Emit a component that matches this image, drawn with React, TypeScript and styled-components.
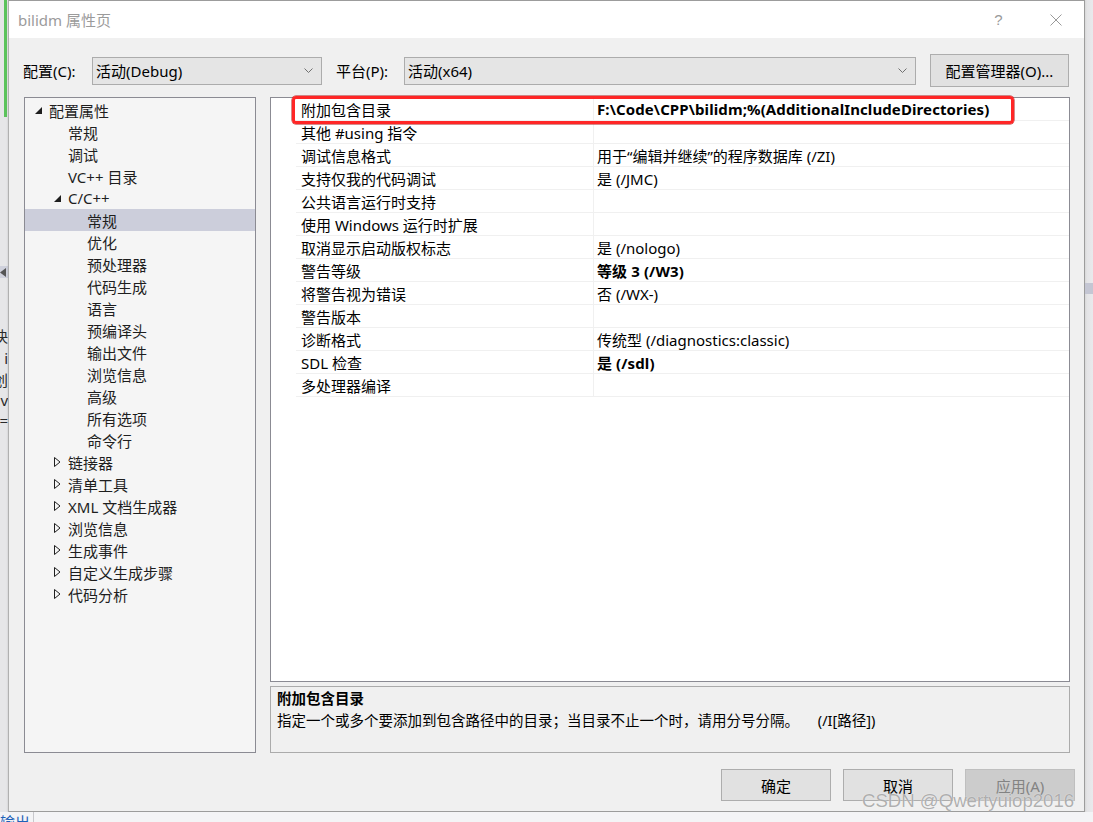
import React from "react";
import styled, { createGlobalStyle } from "styled-components";

const FONT = `"Noto Sans", "Noto Sans CJK SC", sans-serif`;

const GlobalStyle = createGlobalStyle`
	html, body {
		margin: 0;
		padding: 0;
		background: #eeeef2;
	}
	body {
		font-family: ${FONT};
		-webkit-font-smoothing: none;
	}
	* {
		box-sizing: border-box;
	}
`;

const Screen = styled.div`
	position: relative;
	width: 1093px;
	height: 822px;
	overflow: hidden;
	display: grid;
	grid-template-columns: 8px 1077px 8px;
	grid-template-rows: 812px 10px;
	background: #eeeef2;
`;

/* ---------- behind the dialog ---------- */

const LeftStrip = styled.div`
	display: flex;
	flex-direction: column;
	background: #e6e6e8;
	overflow: hidden;
`;

const AccentLine = styled.div`
	align-self: flex-end;
	width: 3px;
	height: 117px;
	margin-right: 1px;
	background: #5cc35c;
	flex-shrink: 0;
`;

const StripBand = styled.div<{ $top: number }>`
	margin-top: ${(p) => p.$top}px;
	height: 12px;
	background: #cfd1dc;
	display: flex;
	align-items: center;
	flex-shrink: 0;
`;

const StripGlyph = styled.div<{ $top: number }>`
	margin-top: ${(p) => p.$top}px;
	height: 20px;
	width: 8px;
	overflow: hidden;
	direction: rtl;
	white-space: nowrap;
	font-size: 15px;
	line-height: 20px;
	color: #2a2a2a;
	flex-shrink: 0;
`;

const RightStrip = styled.div`
	display: flex;
	flex-direction: column;
	background: linear-gradient(to right, #d8d8d8 0, #e4e4e6 2px, #e9e9ec 100%);
`;

const RightBand = styled.div`
	margin-top: 283px;
	height: 11px;
	background: #c4c6d3;
`;

const BottomBar = styled.div`
	grid-column: 1 / span 3;
	display: flex;
	align-items: flex-start;
	background: #f4f4f6;
	overflow: hidden;
`;

const OutputTab = styled.div`
	width: 34px;
	height: 10px;
	border-right: 1px solid #c8c8cc;
	font-size: 15px;
	line-height: 18px;
	color: #1e62b8;
	padding-top: 1px;
	overflow: hidden;
`;

/* ---------- dialog ---------- */

const Dialog = styled.div`
	display: flex;
	flex-direction: column;
	background: #f0f0f0;
	border: 1px solid #9c9c9c;
	border-left-color: #b0b0b0;
	box-shadow: 0 1px 2px rgba(0, 0, 0, 0.15);
`;

const TitleBar = styled.div`
	height: 37px;
	flex-shrink: 0;
	display: flex;
	align-items: center;
	background: #ffffff;
	padding-left: 9px;
`;

const Title = styled.div`
	flex: 1;
	font-size: 15px;
	color: #9b9b9b;
`;

const CaptionButton = styled.div`
	width: 57px;
	height: 37px;
	display: flex;
	align-items: center;
	justify-content: center;
	color: #9a9a9a;
	font-size: 15px;
	font-family: "Liberation Sans", sans-serif;
`;

const ConfigRow = styled.div`
	margin-top: 16px;
	height: 33px;
	display: flex;
	align-items: center;
	padding-left: 14px;
	flex-shrink: 0;
`;

const FieldLabel = styled.label<{ $w: number }>`
	width: ${(p) => p.$w}px;
	font-size: 15px;
	color: #000;
	white-space: nowrap;
`;

const Select = styled.div<{ $w: number }>`
	width: ${(p) => p.$w}px;
	height: 28px;
	display: flex;
	align-items: center;
	justify-content: space-between;
	padding: 0 8px 0 3px;
	background: #e5e5e5;
	border: 1px solid #acacac;
	font-size: 15px;
	color: #000;
	margin-right: 14px;
`;

const Button = styled.div<{ $w: number; $disabled?: boolean }>`
	width: ${(p) => p.$w}px;
	height: ${(p) => (p.$w > 120 ? 33 : 32)}px;
	display: flex;
	align-items: center;
	justify-content: center;
	background: ${(p) => (p.$disabled ? "#cccccc" : "#e1e1e1")};
	border: 1px solid ${(p) => (p.$disabled ? "#bfbfbf" : "#adadad")};
	color: ${(p) => (p.$disabled ? "#838383" : "#000")};
	font-size: 15px;
`;

const Main = styled.div`
	margin-top: 10px;
	height: 656px;
	display: flex;
	gap: 14px;
	padding: 0 14px 0 15px;
	flex-shrink: 0;
`;

const Tree = styled.div`
	width: 232px;
	flex-shrink: 0;
	background: #f5f5f5;
	border: 1px solid #8b8b93;
	padding-top: 1px;
`;

const TreeRow = styled.div<{ $level: number; $selected?: boolean }>`
	height: 22px;
	display: flex;
	align-items: center;
	padding-left: ${(p) => 10 + p.$level * 19}px;
	background: ${(p) => (p.$selected ? "#cccedb" : "transparent")};
	font-size: 15px;
	color: #1e1e1e;
	white-space: nowrap;
`;

const Expander = styled.span`
	width: 14px;
	height: 22px;
	display: flex;
	align-items: center;
	flex-shrink: 0;
`;

const RightCol = styled.div`
	flex: 1;
	display: flex;
	flex-direction: column;
	gap: 4px;
`;

const Grid = styled.div`
	position: relative;
	height: 585px;
	background: #ffffff;
	border: 1px solid #8b8b93;
	padding-left: 25px;
`;

const PropRow = styled.div`
	height: 23px;
	display: grid;
	grid-template-columns: 297px 1fr;
	border-bottom: 1px solid #f0f0f0;
	font-size: 15px;
	color: #000;
`;

const PropName = styled.div`
	display: flex;
	align-items: center;
	padding-left: 5px;
	white-space: nowrap;
`;

const PropValue = styled.div<{ $bold?: boolean }>`
	display: flex;
	align-items: center;
	padding-left: 3px;
	border-left: 1px solid #f0f0f0;
	font-weight: ${(p) => (p.$bold ? 700 : 400)};
	letter-spacing: ${(p) => (p.$bold ? "0.1px" : "0")};
	white-space: nowrap;
`;

const Highlight = styled.div`
	position: absolute;
	left: 21px;
	top: -2px;
	width: 722px;
	height: 28px;
	border: 3px solid #ff2626;
	border-radius: 4px;
	box-shadow: 0 0 0 0.5px #b01818;
	pointer-events: none;
`;

const Description = styled.div`
	height: 67px;
	background: #f0f0f0;
	border: 1px solid #ababab;
	padding-left: 6px;
	font-size: 14.5px;
	color: #000;
`;

const DescTitle = styled.div`
	height: 22px;
	line-height: 22px;
	font-weight: 700;
`;

const DescText = styled.div`
	height: 22px;
	line-height: 22px;
	white-space: pre;
`;

const Footer = styled.div`
	margin-top: 16px;
	display: flex;
	justify-content: flex-end;
	gap: 12px;
	padding-right: 9px;
`;

const Watermark = styled.div`
	position: absolute;
	left: 862px;
	top: 790px;
	font-family: "Liberation Sans", sans-serif;
	font-size: 18.6px;
	white-space: nowrap;
	color: rgba(150, 150, 150, 0.75);
	text-shadow: 0 0 1px rgba(255, 255, 255, 0.9);
	pointer-events: none;
`;

/* ---------- data ---------- */

type TreeItem = {
	text: string;
	level: number;
	expander?: "open" | "closed";
	selected?: boolean;
};

const treeItems: TreeItem[] = [
	{ text: "配置属性", level: 0, expander: "open" },
	{ text: "常规", level: 1 },
	{ text: "调试", level: 1 },
	{ text: "VC++ 目录", level: 1 },
	{ text: "C/C++", level: 1, expander: "open" },
	{ text: "常规", level: 2, selected: true },
	{ text: "优化", level: 2 },
	{ text: "预处理器", level: 2 },
	{ text: "代码生成", level: 2 },
	{ text: "语言", level: 2 },
	{ text: "预编译头", level: 2 },
	{ text: "输出文件", level: 2 },
	{ text: "浏览信息", level: 2 },
	{ text: "高级", level: 2 },
	{ text: "所有选项", level: 2 },
	{ text: "命令行", level: 2 },
	{ text: "链接器", level: 1, expander: "closed" },
	{ text: "清单工具", level: 1, expander: "closed" },
	{ text: "XML 文档生成器", level: 1, expander: "closed" },
	{ text: "浏览信息", level: 1, expander: "closed" },
	{ text: "生成事件", level: 1, expander: "closed" },
	{ text: "自定义生成步骤", level: 1, expander: "closed" },
	{ text: "代码分析", level: 1, expander: "closed" },
];

const props: [string, string, boolean?][] = [
	["附加包含目录", "F:\\Code\\CPP\\bilidm;%(AdditionalIncludeDirectories)", true],
	["其他 #using 指令", ""],
	["调试信息格式", "用于“编辑并继续”的程序数据库 (/ZI)"],
	["支持仅我的代码调试", "是 (/JMC)"],
	["公共语言运行时支持", ""],
	["使用 Windows 运行时扩展", ""],
	["取消显示启动版权标志", "是 (/nologo)"],
	["警告等级", "等级 3 (/W3)", true],
	["将警告视为错误", "否 (/WX-)"],
	["警告版本", ""],
	["诊断格式", "传统型 (/diagnostics:classic)"],
	["SDL 检查", "是 (/sdl)", true],
	["多处理器编译", ""],
];

/* ---------- icons ---------- */

const OpenArrow = () => (
	<svg width="7" height="7" viewBox="0 0 7 7">
		<polygon points="7,0 7,7 0,7" fill="#1e1e1e" />
	</svg>
);

const ClosedArrow = () => (
	<svg width="7" height="10" viewBox="0 0 7 10">
		<polygon points="0.5,0.5 6,5 0.5,9.5" fill="none" stroke="#1e1e1e" strokeWidth="1" />
	</svg>
);

const Chevron = () => (
	<svg width="9" height="5" viewBox="0 0 9 5">
		<polyline points="0.5,0.5 4.5,4.5 8.5,0.5" fill="none" stroke="#707070" strokeWidth="1" />
	</svg>
);

const CloseIcon = () => (
	<svg width="12" height="12" viewBox="0 0 12 12">
		<path d="M0.5 0.5 L11.5 11.5 M11.5 0.5 L0.5 11.5" stroke="#9a9a9a" strokeWidth="1" />
	</svg>
);

function App() {
	return (
		<Screen>
			<GlobalStyle />
			<LeftStrip>
				<AccentLine />
				<StripBand $top={149}>
					<svg width="6" height="9" viewBox="0 0 6 9">
						<polygon points="6,0 6,9 0,4.5" fill="#555" />
					</svg>
				</StripBand>
				<StripGlyph $top={48}>泱</StripGlyph>
				<StripGlyph $top={2}>i</StripGlyph>
				<StripGlyph $top={2}>创</StripGlyph>
				<StripGlyph $top={0}>v</StripGlyph>
				<StripGlyph $top={0}>==</StripGlyph>
			</LeftStrip>

			<Dialog>
				<TitleBar>
					<Title>bilidm 属性页</Title>
					<CaptionButton>?</CaptionButton>
					<CaptionButton>
						<CloseIcon />
					</CaptionButton>
				</TitleBar>

				<ConfigRow>
					<FieldLabel $w={69}>配置(C):</FieldLabel>
					<Select $w={230}>
						<span>活动(Debug)</span>
						<Chevron />
					</Select>
					<FieldLabel $w={68}>平台(P):</FieldLabel>
					<Select $w={512}>
						<span>活动(x64)</span>
						<Chevron />
					</Select>
					<Button $w={139}>配置管理器(O)...</Button>
				</ConfigRow>

				<Main>
					<Tree>
						{treeItems.map((item, i) => (
							<TreeRow key={i} $level={item.level} $selected={item.selected}>
								<Expander>
									{item.expander === "open" && <OpenArrow />}
									{item.expander === "closed" && <ClosedArrow />}
								</Expander>
								{item.text}
							</TreeRow>
						))}
					</Tree>

					<RightCol>
						<Grid>
							{props.map(([name, value, bold], i) => (
								<PropRow key={i}>
									<PropName>{name}</PropName>
									<PropValue $bold={bold}>{value}</PropValue>
								</PropRow>
							))}
							<Highlight />
						</Grid>
						<Description>
							<DescTitle>附加包含目录</DescTitle>
							<DescText>
								{"指定一个或多个要添加到包含路径中的目录；当目录不止一个时，请用分号分隔。     (/I[路径])"}
							</DescText>
						</Description>
					</RightCol>
				</Main>

				<Footer>
					<Button $w={110}>确定</Button>
					<Button $w={110}>取消</Button>
					<Button $w={110} $disabled>
						应用(A)
					</Button>
				</Footer>
			</Dialog>

			<RightStrip>
				<RightBand />
			</RightStrip>

			<BottomBar>
				<OutputTab>输出</OutputTab>
			</BottomBar>

			<Watermark>CSDN @Qwertyuiop2016</Watermark>
		</Screen>
	);
}

export default App;
